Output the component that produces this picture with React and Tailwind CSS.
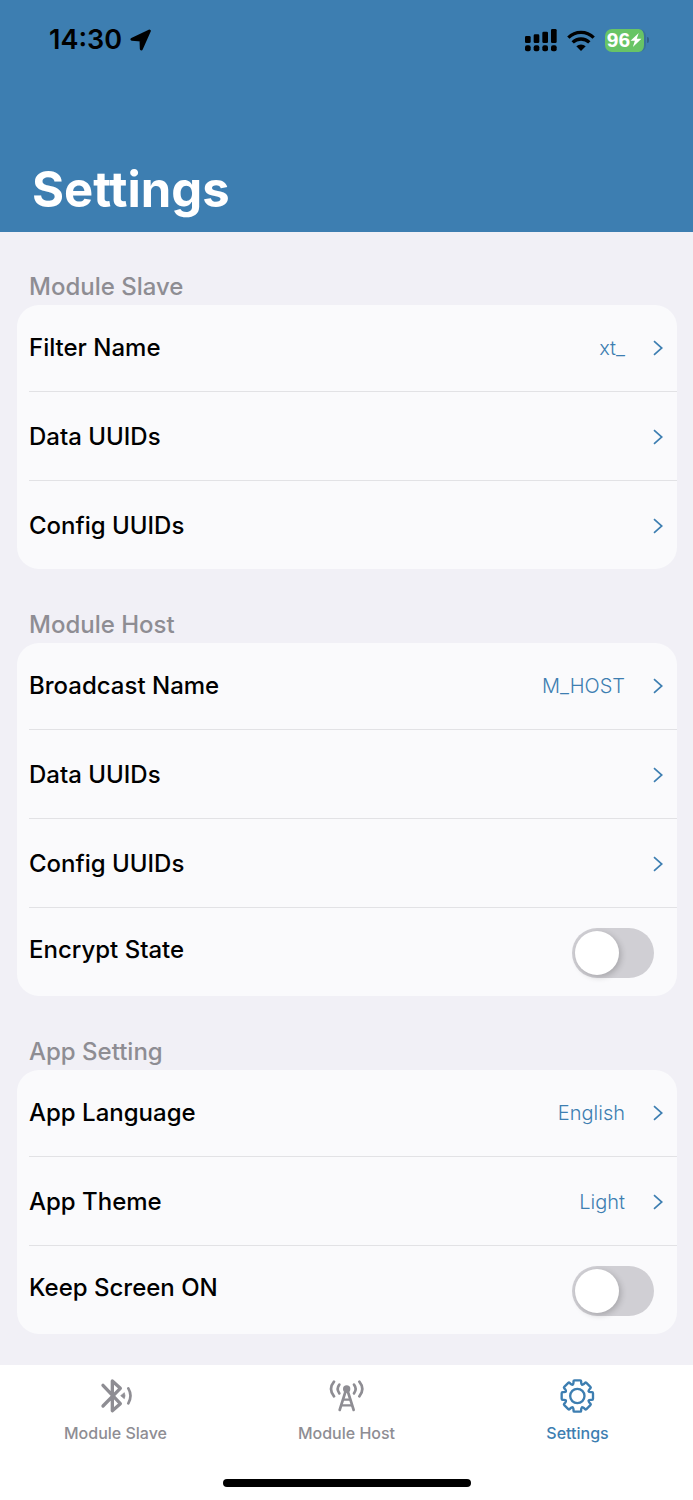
import { useState } from "react";

const sections = [
  {
    title: "Module Slave",
    rows: [
      { label: "Filter Name", value: "xt_" },
      { label: "Data UUIDs" },
      { label: "Config UUIDs" },
    ],
  },
  {
    title: "Module Host",
    rows: [
      { label: "Broadcast Name", value: "M_HOST" },
      { label: "Data UUIDs" },
      { label: "Config UUIDs" },
      { label: "Encrypt State", toggle: "encrypt" },
    ],
  },
  {
    title: "App Setting",
    rows: [
      { label: "App Language", value: "English" },
      { label: "App Theme", value: "Light" },
      { label: "Keep Screen ON", toggle: "keepScreen" },
    ],
  },
];

// ---------------- ICONS ----------------
const LocationIcon = () => (
  <svg viewBox="0 0 66 66" className="size-[22px]" aria-hidden="true">
    <path
      d="M58 6 L6 31 L33 33 L34 60 Z"
      fill="#000"
      stroke="#000"
      strokeWidth="9"
      strokeLinejoin="round"
    />
  </svg>
);

const SignalIcon = () => (
  <svg viewBox="0 0 96 69" className="h-[23px] w-8" aria-hidden="true">
    <rect x="0" y="21" width="17" height="21" rx="4" />
    <rect x="26" y="16" width="17" height="26" rx="4" />
    <rect x="52" y="8" width="17" height="34" rx="4" />
    <rect x="78" y="0" width="17" height="42" rx="4" />
    <rect x="0" y="49" width="17" height="18" rx="6" />
    <rect x="26" y="49" width="17" height="18" rx="6" />
    <rect x="52" y="49" width="17" height="18" rx="6" />
    <rect x="78" y="49" width="17" height="18" rx="6" />
  </svg>
);

const WifiIcon = () => (
  <svg viewBox="0 0 84 63" className="h-[21px] w-7" aria-hidden="true">
    <g fill="none" stroke="#000" strokeWidth="10">
      <path d="M4 23 A54 54 0 0 1 80 23" />
      <path d="M17 37 A36 36 0 0 1 67 37" />
    </g>
    <path d="M42 63 L28 49 A21 21 0 0 1 56 49 Z" />
  </svg>
);

const BoltIcon = () => (
  <svg viewBox="0 0 30 36" className="h-3.5 w-3" aria-hidden="true">
    <path d="M22 0 L1 20 H12 L7 36 L29 15 H17 Z" fill="#fff" />
  </svg>
);

const ChevronIcon = () => (
  <svg viewBox="0 0 10 16" className="h-4 w-[10px]" aria-hidden="true">
    <path d="M1 1.2 L8.8 8 L1 14.8" fill="none" stroke="#3d7eb1" strokeWidth="1.7" />
  </svg>
);

const BluetoothIcon = () => (
  <svg viewBox="172 69 108 108" className="size-9" fill="none" stroke="currentColor" aria-hidden="true">
    <path
      d="M187 91 L239 146 L215 167 V78 L239 100 L187 153"
      strokeWidth="10"
      strokeLinecap="round"
      strokeLinejoin="round"
    />
    <path d="M240 122 L251 113 Q255 122 251 131 Z" fill="currentColor" strokeWidth="2" strokeLinejoin="round" />
    <path d="M263 100 Q276 122 263 145" strokeWidth="8" strokeLinecap="round" />
  </svg>
);

const AntennaIcon = () => (
  <svg viewBox="144 69 108 108" className="size-9" fill="none" stroke="currentColor" aria-hidden="true">
    <circle cx="197" cy="102" r="11" fill="currentColor" stroke="none" />
    <g strokeWidth="8" strokeLinecap="round">
      <path d="M194 108 L176 165 M200 108 L218 165" />
      <path d="M187 134 H207 M182 151 H212" strokeWidth="6.5" />
      <path d="M175 89 Q165 102 175 115" />
      <path d="M219 89 Q229 102 219 115" />
      <path d="M159 80 Q141 102 159 124" />
      <path d="M235 80 Q253 102 235 124" />
    </g>
  </svg>
);

const GearIcon = () => {
  // one tooth, repeated every 45 degrees
  const tooth = "M-14.2 -34.3 Q-11.5 -36 -11.5 -40 V-44 Q-11.5 -47 -8.5 -47 H8.5 Q11.5 -47 11.5 -44 V-40 Q11.5 -36 14.2 -34.3";
  return (
    <svg viewBox="-52 -54 108 108" className="size-9" fill="none" stroke="currentColor" aria-hidden="true">
      <g strokeWidth="7" strokeLinejoin="round" strokeLinecap="round">
        {[0, 45, 90, 135, 180, 225, 270, 315].map((angle) => (
          <path key={angle} d={tooth} transform={`rotate(${angle})`} />
        ))}
      </g>
      <circle r="21.5" strokeWidth="7" />
    </svg>
  );
};

const tabs = [
  { name: "Module Slave", icon: BluetoothIcon },
  { name: "Module Host", icon: AntennaIcon },
  { name: "Settings", icon: GearIcon },
];

// ---------------- ROWS ----------------
const LinkRow = ({ label, value }) => (
  <button type="button" className="flex h-[86px] w-full items-center pr-3.5 text-left">
    <span className="flex-1 text-2xl font-medium text-black">{label}</span>
    {value && <span className="mr-7 text-xl font-light text-[#3d7eb1]">{value}</span>}
    <ChevronIcon />
  </button>
);

const ToggleRow = ({ id, label, checked, onChange }) => (
  <div className="flex h-[86px] items-center justify-between pr-[23px]">
    <label htmlFor={id} className="pb-1.5 text-2xl font-medium text-black">
      {label}
    </label>
    <input
      id={id}
      type="checkbox"
      role="switch"
      checked={checked}
      onChange={onChange}
      className="h-[50px] w-[82px] cursor-pointer appearance-none rounded-full bg-[#d0cfd4] p-[3px] before:block before:size-11 before:rounded-full before:bg-white before:shadow-[2px_2px_6px_rgba(0,0,0,0.2)] checked:bg-[#3d7eb1] checked:before:translate-x-8"
    />
  </div>
);

export default function App() {
  const [activeTab, setActiveTab] = useState("Settings");
  const [toggles, setToggles] = useState({ encrypt: false, keepScreen: false });

  const flip = (key) => setToggles((prev) => ({ ...prev, [key]: !prev[key] }));

  return (
    <div className="flex min-h-screen flex-col bg-[#f1f0f6] font-['Inter','Liberation_Sans',sans-serif]">
      {/* HEADER */}
      <header className="bg-[#3d7eb1] pb-3">
        <div className="flex h-20 items-center justify-between pr-11 pl-[49px]">
          <div className="flex items-center gap-2">
            <span className="text-[27px] font-semibold text-black">14:30</span>
            <LocationIcon />
          </div>
          <div className="flex items-center gap-2.5">
            <SignalIcon />
            <WifiIcon />
            <div className="flex items-center gap-px">
              <div className="flex h-[23px] w-[41px] items-center justify-center rounded-[7px] border-r-2 border-[#39729b] bg-[#68c466] font-['Liberation_Sans',sans-serif] text-[21px] font-bold text-white">
                <span>96</span>
                <BoltIcon />
              </div>
              <div className="h-1.5 w-0.5 rounded-r-full bg-[#2f6088]" />
            </div>
          </div>
        </div>
        <h1 className="mt-20 pl-8 text-[49px] leading-[60px] font-bold text-white">Settings</h1>
      </header>

      {/* SETTINGS LIST */}
      <main className="flex flex-1 flex-col gap-[38px] pt-[37px] pr-4 pb-[31px] pl-[17px]">
        {sections.map((section) => (
          <section key={section.title}>
            <h2 className="pl-3 text-2xl leading-9 font-medium text-[#8e8d93]">{section.title}</h2>
            <div className="flex flex-col rounded-[22px] bg-[#fafafc] pl-3">
              {section.rows.map((row, i) => (
                <div key={row.label}>
                  {i > 0 && <div className="mb-0.5 h-px bg-[#e2e2e5]" />}
                  {row.toggle ? (
                    <ToggleRow
                      id={row.toggle}
                      label={row.label}
                      checked={toggles[row.toggle]}
                      onChange={() => flip(row.toggle)}
                    />
                  ) : (
                    <LinkRow label={row.label} value={row.value} />
                  )}
                </div>
              ))}
            </div>
          </section>
        ))}
      </main>

      {/* TAB BAR */}
      <nav className="bg-white pt-[13px] pb-[13px]">
        <div className="flex">
          {tabs.map(({ name, icon: Icon }) => (
            <button
              key={name}
              type="button"
              onClick={() => setActiveTab(name)}
              className={`flex flex-1 flex-col items-center gap-[7px] text-base font-medium ${
                activeTab === name ? "text-[#3d7eb1]" : "text-[#8e8d93]"
              }`}
            >
              <Icon />
              {name}
            </button>
          ))}
        </div>
        <div className="mx-auto mt-[34px] h-2 w-[248px] rounded-full bg-black" />
      </nav>
    </div>
  );
}
